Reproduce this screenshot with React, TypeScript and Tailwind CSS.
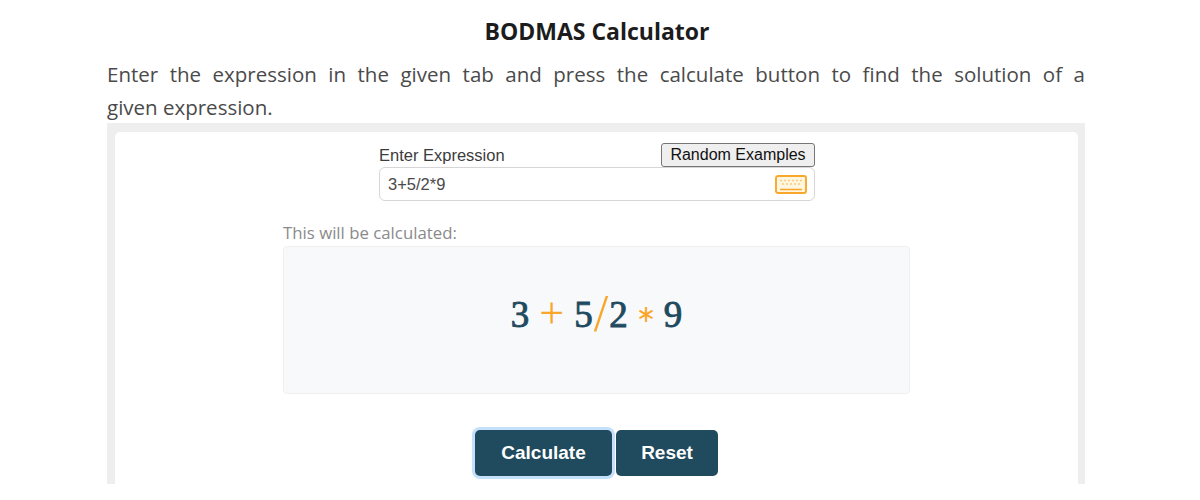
import React from "react";

const KeyboardIcon = () => (
  <svg width="32" height="19" viewBox="0 0 32 19" fill="none" stroke="#f9a72b">
    <rect x="1" y="1" width="30" height="17" rx="2" strokeWidth="1.900" fill="#fff6e0" />
    <path d="M5 5.500h22M7 9h18" strokeWidth="1.500" strokeDasharray="2 2" opacity="0.55" />
    <path d="M5 14.500h22" strokeWidth="1.500" />
  </svg>
);

const App = () => {
  return (
    <div className="h-[484px] overflow-hidden bg-white flex justify-center">
      <main className="w-[978px] ml-[-8px] flex flex-col">
        {/* Title */}
        <h1 className="h-[59px] pt-[16px] pl-[2px] text-center text-[23px] leading-[31px] font-bold text-[#1c1c1c] font-['Open_Sans',sans-serif]">
          BODMAS Calculator
        </h1>

        <div className="h-[64px] text-[20.500px] leading-[32px] text-[#4a4a4a] font-['Open_Sans',sans-serif]">
          <p className="mt-[-1px] mb-[1px] text-justify [text-align-last:justify]">
            Enter the expression in the given tab and press the calculate button to find the solution of a
          </p>
          <p>given expression.</p>
        </div>

        {/* Calculator panel */}
        <section className="flex-grow bg-[#eeeeee] pl-[8px] pr-[7px] pt-[9px]">
          <div className="h-full bg-white rounded-t-[5px] flex flex-col items-center pt-[11px]">
            <div className="w-[436px] ml-[1px]">
              <div className="flex items-end justify-between h-[24px]">
                <label className="pb-[1px] text-[16.500px] leading-[22px] text-[#3c3c3c] font-['Liberation_Sans',sans-serif]">Enter Expression</label>
                <button className="w-[154px] h-[24px] bg-[#efefef] border border-[#767676] rounded-[3px] text-[16px] leading-[22px] text-[#111] font-['Liberation_Sans',sans-serif]">
                  Random Examples
                </button>
              </div>
              <div className="h-[34px] border border-[#d6d6d6] rounded-[6px] flex items-center justify-between pl-[8px] pr-[7px]">
                <span className="text-[16.500px] text-[#4a4a4a] font-['Liberation_Sans',sans-serif]">3+5/2*9</span>
                <KeyboardIcon />
              </div>
            </div>

            <div className="w-[627px] mt-[21px]">
              <p className="text-[16.800px] leading-[22px] text-[#8a8a8a] font-['Open_Sans',sans-serif]">This will be calculated:</p>
              <div className="h-[148px] mt-[2px] pb-[12px] bg-[#f8f9fa] border border-[#f0f0f0] rounded-[4px] flex items-center justify-center font-['Liberation_Serif',serif] text-[37px] leading-none text-[#1f4a5f]">
                <span className="[-webkit-text-stroke:0.9px_#1f4a5f]">3</span>
                <span className="text-[#f9a72b] text-[44px] mx-[10px]">+</span>
                <span className="[-webkit-text-stroke:0.9px_#1f4a5f]">5</span>
                <span className="text-[#f9a72b] text-[52px] mx-[1px]">/</span>
                <span className="[-webkit-text-stroke:0.9px_#1f4a5f]">2</span>
                <span className="text-[#f9a72b] text-[24px] mx-[8px]">∗</span>
                <span className="[-webkit-text-stroke:0.9px_#1f4a5f]">9</span>
              </div>
            </div>

            <div className="flex gap-[4px] mt-[36px]">
              <button className="w-[137px] h-[46px] bg-[#204a5d] rounded-[5px] text-white text-[19px] font-bold font-['Liberation_Sans',sans-serif] shadow-[0_0_0_3px_#c4e0fb]">
                Calculate
              </button>
              <button className="w-[102px] h-[46px] bg-[#204a5d] rounded-[5px] text-white text-[19px] font-bold font-['Liberation_Sans',sans-serif]">
                Reset
              </button>
            </div>
          </div>
        </section>
      </main>
    </div>
  );
};

export default App;
